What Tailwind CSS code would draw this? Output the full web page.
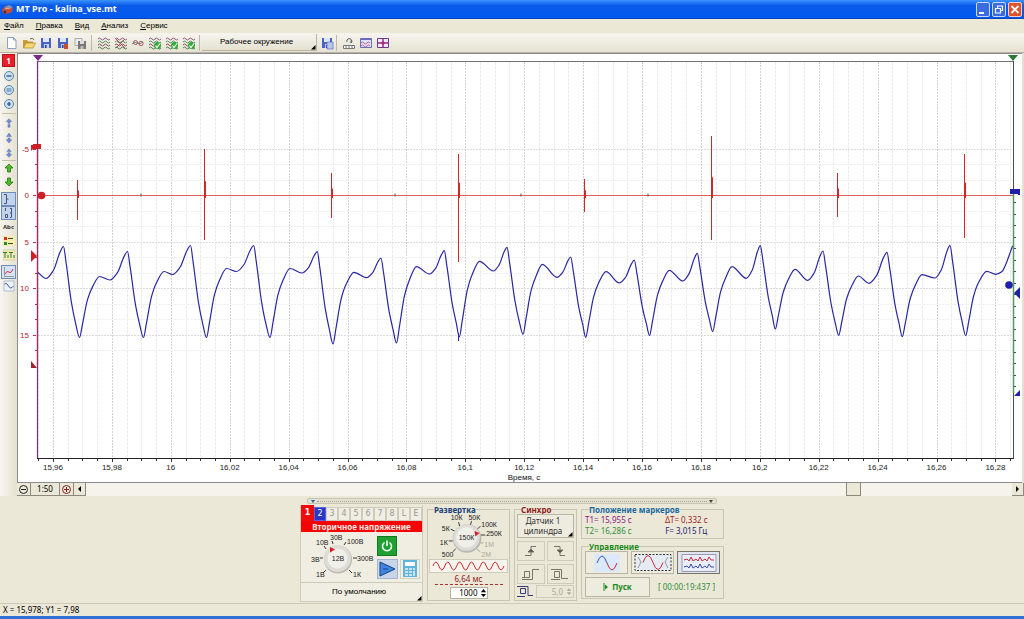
<!DOCTYPE html>
<html lang="ru">
<head>
<meta charset="utf-8">
<title>MT Pro - kalina_vse.mt</title>
<script src="https://cdn.jsdelivr.net/npm/@tailwindcss/browser@4"></script>
</head>
<body class="min-h-screen flex flex-col bg-[#ece8d8] font-['Noto_Sans',sans-serif] text-[8px] leading-[10px] text-black">

<svg class="hidden">
  <symbol id="waves" viewBox="0 0 14 14"><g fill="none" stroke-width="1"><path stroke="#8a5a78" d="M1 3q1.500-2 3 0t3 0t3 0t3 0"/><path stroke="#4f8a5a" d="M1 6q1.500-2 3 0t3 0t3 0t3 0"/><path stroke="#8a4a60" d="M1 9q1.500-2 3 0t3 0t3 0t3 0"/><path stroke="#4f7a5a" d="M1 12q1.500-2 3 0t3 0t3 0t3 0"/></g></symbol>
  <symbol id="waves-ok" viewBox="0 0 14 14"><use href="#waves"/><circle cx="9.500" cy="9.500" r="3.500" fill="#35a83a"/><path d="M7.500 9.500l1.500 2 3-4" fill="none" stroke="#fff" stroke-width="1.200"/></symbol>
  <symbol id="floppy" viewBox="0 0 14 14"><path d="M2 2h10v10H2z" fill="#4a63c4"/><path d="M4 2h6v4H4z" fill="#dfe6fa"/><path d="M5 8h5v4H5z" fill="#c4cbe8"/><path d="M6 9h1.500v3H6z" fill="#2b3c90"/></symbol>
  <symbol id="updown" viewBox="0 0 14 14"><path d="M7 0l3.500 5h-7zM7 14l4-4.500H8.500V7h-3v2.500H3z" fill="#6f8fd0" stroke="#3d62ad" stroke-width=".5"/></symbol>
</svg>

<!-- Title bar -->
<header class="h-[19px] shrink-0 flex items-center bg-gradient-to-b from-[#3a93ff] via-[#0a5ae8] via-30% to-[#0058ee] border-b border-[#0a44b8] pl-[1px]">
  <svg class="w-[13px] h-[13px]" viewBox="0 0 13 13"><path d="M1 7q2-4 7-4l4 2-1 4-5 2-4-1z" fill="#c0503a"/><path d="M3 4l5-2 4 2-4 2z" fill="#8a8fa8"/><circle cx="4" cy="9" r="1.500" fill="#5a2a2a"/><path d="M4 6l5-1" stroke="#f0b0a0"/></svg>
  <h1 class="ml-[2px] flex-1 text-[9px] leading-[12px] font-bold text-white font-['Open_Sans',sans-serif]">MT Pro - kalina_vse.mt</h1>
  <div class="flex gap-[2px] pr-[2px]">
    <button aria-label="Свернуть" class="w-[14px] h-[15px] rounded-[2px] border border-[#c9d8fb] bg-[#3a6be0]"><svg viewBox="0 0 12 13" class="w-full h-full"><path d="M2 10h5" stroke="#fff" stroke-width="2"/></svg></button>
    <button aria-label="Восстановить" class="w-[14px] h-[15px] rounded-[2px] border border-[#c9d8fb] bg-[#3a6be0]"><svg viewBox="0 0 12 13" class="w-full h-full"><path d="M4.500 5V3h5v4.500H8M2.500 5.500h5V10h-5z" fill="none" stroke="#fff" stroke-width="1.200"/></svg></button>
    <button aria-label="Закрыть" class="w-[14px] h-[15px] rounded-[2px] border border-[#f3cfc4] bg-[#e0522c]"><svg viewBox="0 0 12 13" class="w-full h-full"><path d="M2.500 3l7 7M9.500 3l-7 7" stroke="#fff" stroke-width="1.800"/></svg></button>
  </div>
</header>

<!-- Menu -->
<nav class="h-[14px] shrink-0 flex items-center gap-[12px] pl-[4px] bg-[#ece8d6] font-['Liberation_Sans',sans-serif]">
  <a href="#"><u>Ф</u>айл</a><a href="#"><u>П</u>равка</a><a href="#"><u>В</u>ид</a><a href="#"><u>А</u>нализ</a><a href="#"><u>С</u>ервис</a>
</nav>

<!-- Toolbar -->
<div class="h-[20px] shrink-0 flex items-center pl-[3px] bg-gradient-to-b from-[#f6f4ee] to-[#e6e3d3] border-b border-[#b5b2a4]">
  <button aria-label="Новый" class="w-[17px] grid place-items-center"><svg class="w-[14px] h-[14px]" viewBox="0 0 14 14"><path d="M2.500 1.500h6l2.500 2.500v8.500H2.500z" fill="#fff" stroke="#8fa0c0"/><path d="M8.500 1.500V4H11" fill="none" stroke="#8fa0c0"/></svg></button>
  <button aria-label="Открыть" class="w-[17px] grid place-items-center"><svg class="w-[14px] h-[14px]" viewBox="0 0 14 14"><path d="M1 4h4l1 1.500h5V12H1z" fill="#c99a34"/><path d="M4 7h9.500l-2.500 5H1.500z" fill="#f6d878" stroke="#b0852c" stroke-width=".7"/><path d="M8 3q3-2 4 1" fill="none" stroke="#6f6a3a"/></svg></button>
  <button aria-label="Сохранить" class="w-[17px] grid place-items-center"><svg class="w-[14px] h-[14px]"><use href="#floppy"/></svg></button>
  <button aria-label="Сохранить как" class="w-[17px] grid place-items-center"><svg class="w-[14px] h-[14px]" viewBox="0 0 14 14"><use href="#floppy"/><path d="M8 8h4v5H8z" fill="#cc4a2c"/></svg></button>
  <button aria-label="Сохранить всё" class="w-[17px] grid place-items-center"><svg class="w-[14px] h-[14px]" viewBox="0 0 14 14"><path d="M2 2.500h7v7H2z" fill="#eee" stroke="#aaa"/><path d="M5 5h8v8H5z" fill="#777"/><path d="M7 5h4v3H7z" fill="#ddd"/><path d="M7.500 10h3v3h-3z" fill="#bbb"/></svg></button>
  <i class="mx-[3px] w-px h-[16px] bg-[#bdb9a8]"></i>
  <button aria-label="Осциллограммы" class="w-[17px] grid place-items-center"><svg class="w-[14px] h-[14px]"><use href="#waves"/></svg></button>
  <button aria-label="Скрыть все" class="w-[17px] grid place-items-center"><svg class="w-[14px] h-[14px]" viewBox="0 0 14 14"><use href="#waves"/><path d="M2 3l9 9M11 3l-9 9" stroke="#a03a50" stroke-width=".8"/></svg></button>
  <button aria-label="Сравнить" class="w-[17px] grid place-items-center"><svg class="w-[14px] h-[14px]" viewBox="0 0 14 14" fill="none"><circle cx="4.500" cy="6.500" r="2" stroke="#a03a50" stroke-width=".8"/><circle cx="10" cy="7.500" r="2.200" stroke="#a03a50" stroke-width=".8"/><path d="M1 8q2-3 5-1t6-1" stroke="#556a58" stroke-width=".8"/></svg></button>
  <button aria-label="Группа 1" class="w-[17px] grid place-items-center"><svg class="w-[14px] h-[14px]"><use href="#waves-ok"/></svg></button>
  <button aria-label="Группа 2" class="w-[17px] grid place-items-center"><svg class="w-[14px] h-[14px]"><use href="#waves-ok"/></svg></button>
  <button aria-label="Группа 3" class="w-[17px] grid place-items-center"><svg class="w-[14px] h-[14px]"><use href="#waves-ok"/></svg></button>
  <i class="mx-[2px] w-px h-[16px] bg-[#bdb9a8]"></i>
  <button class="w-[115px] h-[17px] flex items-center justify-center bg-gradient-to-b from-[#f6f4ee] to-[#e4e1d2] border-b border-r border-[#b9b5a5] font-['Liberation_Sans',sans-serif]"><span class="flex-1">Рабочее окружение</span><svg class="w-[5px] h-[5px] self-end" viewBox="0 0 5 5"><path d="M4.500 0v4.500H0z"/></svg></button>
  <button aria-label="Сохранить окружение" class="w-[19px] grid place-items-center"><svg class="w-[14px] h-[14px]" viewBox="0 0 14 14"><use href="#floppy"/><path d="M7 6h6v7H7z" fill="#b9c6ee" stroke="#5a6fc0" stroke-width=".7"/></svg></button>
  <i class="mr-[3px] w-px h-[16px] bg-[#bdb9a8]"></i>
  <button aria-label="Линейка" class="w-[17px] grid place-items-center"><svg class="w-[14px] h-[14px]" viewBox="0 0 14 14" fill="none"><path d="M1.500 9.500h11v3h-11z" fill="#fff" stroke="#777"/><path d="M4 10v2M7 10v2M10 10v2" stroke="#777"/><path d="M5 6a2.500 2.500 0 1 1 4 1M9 7V4.500" stroke="#555"/></svg></button>
  <button aria-label="График" class="w-[17px] grid place-items-center"><svg class="w-[14px] h-[14px]" viewBox="0 0 14 14" fill="none"><path d="M1.500 2.500h11v9h-11z" fill="#dfe4fa" stroke="#6a6fb8"/><path d="M2 3.500h10" stroke="#6a6fb8"/><path d="M2 7q1.500-2 3 0t3 0t3 0M2 10q1.500-2 3 0t3 0t3 0" stroke="#b0406a" stroke-width=".8"/></svg></button>
  <button aria-label="Раскладка" class="w-[17px] grid place-items-center"><svg class="w-[14px] h-[14px]" viewBox="0 0 14 14" fill="none"><path d="M1.500 2.500h11v9h-11z" fill="#f6e8f4" stroke="#6a3a90"/><path d="M7 3v8M2 7h10" stroke="#a02a80" stroke-width="1.500"/><path d="M5 7l2-2 2 2-2 2z" fill="#a02a80"/></svg></button>
</div>

<main class="flex shrink-0">
  <!-- Channel tools -->
  <aside class="w-[17px] shrink-0 flex flex-col items-center pt-[1px] bg-gradient-to-r from-[#f7f5f0] to-[#e6e2d0]">
    <button class="w-[13px] h-[13px] mb-[2px] bg-[#e8202c] border border-[#b01820] text-white font-bold leading-[10px]">1</button>
    <button aria-label="Уменьшить" class="h-[14px]"><svg class="w-[12px] h-[12px]" viewBox="0 0 12 12"><circle cx="6" cy="6" r="4.500" fill="#c8e0f0" stroke="#5f86ac"/><path d="M3.500 6h5" stroke="#254a78" stroke-width="1.200"/></svg></button>
    <button aria-label="Исходный размер" class="h-[14px]"><svg class="w-[12px] h-[12px]" viewBox="0 0 12 12"><circle cx="6" cy="6" r="4.500" fill="#c8e0f0" stroke="#5f86ac"/><path d="M3.500 5h5M3.500 7h5" stroke="#4d77a8"/></svg></button>
    <button aria-label="Увеличить" class="h-[14px]"><svg class="w-[12px] h-[12px]" viewBox="0 0 12 12"><circle cx="6" cy="6" r="4.500" fill="#c8e0f0" stroke="#5f86ac"/><path d="M4 6h4M6 4v4" stroke="#254a78" stroke-width="1.200"/></svg></button>
    <i class="mt-[2px] w-[14px] h-[2px] border-t border-[#c5c1b0]"></i>
    <button aria-label="Сдвиг вверх" class="h-[15px]"><svg class="w-[10px] h-[12px]" viewBox="0 0 14 14"><path d="M7 1l4 4H8.500v2.500h-3V5H3zM5.500 9h3v4h-3z" fill="#6f8fd0" stroke="#3d62ad" stroke-width=".5"/></svg></button>
    <button aria-label="По центру" class="h-[15px]"><svg class="w-[10px] h-[12px]"><use href="#updown"/></svg></button>
    <button aria-label="Сдвиг вниз" class="h-[15px]"><svg class="w-[10px] h-[12px]" viewBox="0 0 14 14"><path d="M7 13l4-4H8.500V6.500h-3V9H3zM7 1l3 4H4z" fill="#6f8fd0" stroke="#3d62ad" stroke-width=".5"/></svg></button>
    <i class="w-[14px] h-px bg-[#c5c1b0]"></i>
    <button aria-label="Вверх" class="h-[14px]"><svg class="w-[10px] h-[10px]" viewBox="0 0 10 10"><path d="M5 1l4 4H6.500v4h-3V5H1z" fill="#4cb82c" stroke="#257a10" stroke-width=".8"/></svg></button>
    <button aria-label="Вниз" class="h-[14px]"><svg class="w-[10px] h-[10px]" viewBox="0 0 10 10"><path d="M5 9l4-4H6.500V1h-3v4H1z" fill="#4cb82c" stroke="#257a10" stroke-width=".8"/></svg></button>
    <button aria-label="Шкала" class="mt-[3px] w-[15px] h-[14px] bg-[#c3d3ec] border border-[#6f8cb8]"><svg class="w-full h-full" viewBox="0 0 13 12"><path d="M2 1.500h2.500v9H2M4.500 6h2" fill="none" stroke="#44557c"/></svg></button>
    <button aria-label="Значения шкалы" class="w-[15px] h-[14px] bg-[#c3d3ec] border border-[#6f8cb8]"><svg class="w-full h-full" viewBox="0 0 13 12"><path d="M3.500 1v3M5.500 7.500h-2v3h2zM9.500 1v9.500M8 1.500h1M8 6h1M8 10.500h1" fill="none" stroke="#44557c"/></svg></button>
    <button aria-label="Подписи" class="w-[13px] h-[14px] text-[6px] leading-[8px] font-bold text-[#333]">Abc</button>
    <button aria-label="Легенда" class="h-[14px]"><svg class="w-[12px] h-[12px]" viewBox="0 0 12 12"><path d="M0 1h12v10H0z" fill="#f5eea8"/><path d="M1 2h3v3H1z" fill="#c33"/><path d="M1 7h3v3H1z" fill="#2a8a2a"/><path d="M5 3.500h5M5 8.500h5" stroke="#444"/></svg></button>
    <button aria-label="Маркеры времени" class="h-[14px]"><svg class="w-[12px] h-[12px]" viewBox="0 0 12 12"><path d="M0 1h12v10H0z" fill="#f3f1b8" stroke="#bbb67a" stroke-width=".5"/><path d="M0 3.500h4M2 3.500V9M5 6v3M6 3.500h4M8 3.500V9M11 6v3" stroke="#2f7a2f" fill="none"/></svg></button>
    <button aria-label="Кривая" class="mt-[3px] w-[15px] h-[14px] bg-[#d6e2f6] border border-[#6f8cb8]"><svg class="w-full h-full" viewBox="0 0 13 12"><path d="M2.500 1v9.500H12" fill="none" stroke="#999"/><path d="M3 8q2-4 4-2t4-3" fill="none" stroke="#d0303c"/></svg></button>
    <button aria-label="Сглаживание" class="h-[14px]"><svg class="w-[12px] h-[12px]" viewBox="0 0 12 12"><path d="M1 1h10v10H1z" fill="#eef2fb" stroke="#8c9cc0" stroke-width=".6"/><path d="M1.500 4q2-2 4 2t5 0" fill="none" stroke="#3a56a8"/></svg></button>
  </aside>

  <section class="flex-1 min-w-0">
    <svg id="chart" class="block w-full bg-white" viewBox="17 53 1007 430" font-family="'Liberation Sans', sans-serif" font-size="8">
      <path d="M17.500 53V483M17 53.500H1022M17 482.500H1022" stroke="#8d8a90" fill="none"/>
      <path d="M1022 53h2v430h-2z" fill="#e3e0d4"/>
      <g id="grid" fill="none"></g>
      <path d="M38 61.500h975" stroke="#70707a"/>
      <path d="M38 195h975v1H38z" fill="#e06060"/>
      <g id="spikes" stroke="#cc2a2a" fill="none"></g>
      <path id="curve" fill="none" stroke="#2a26a0" stroke-width="1.200"/>
      <path d="M458.500 333v8" stroke="#2a26a0"/>
      <path d="M37.500 61v397" stroke="#7a2a86" stroke-width="1.200"/>
      <path d="M37.500 148v218" stroke="#a8285a" stroke-width="1.200"/>
      <path d="M1013.500 61v129M1013.500 393v66" stroke="#44504c"/>
      <path d="M1013.500 190v203" stroke="#4d9a62" stroke-width="1.500"/>
      <path d="M37 458.500h977" stroke="#222"/>
      <g id="ticks"></g>
      <path d="M33 55h10l-5 6z" fill="#7a2a86"/>
      <path d="M1008 55h10l-5 6z" fill="#2a7a34"/>
      <path d="M31 151v-6h2v-1h8v5h-8z" fill="#cc1f28"/>
      <circle cx="41.500" cy="195.500" r="3.800" fill="#cc1f28"/>
      <path d="M31 250l6 6-6 6z" fill="#cc1f28"/>
      <path d="M31 361l6 7h-6z" fill="#a82030"/>
      <path d="M1010 189h10v6h-2v-1h-8z" fill="#1f1fa8"/>
      <circle cx="1009" cy="285" r="3.800" fill="#1f1fa8"/>
      <path d="M1020 287v12l-6-6z" fill="#1f1fa8"/>
      <path d="M1020 390v6h-6z" fill="#1f1fa8"/>
      <g id="labels" text-anchor="middle" fill="#222"></g>
      <text x="524" y="480" text-anchor="middle" fill="#111">Время, с</text>
    </svg>
    <div class="h-[13px] flex bg-[#f5f3ec]">
      <button aria-label="Уменьшить масштаб" class="w-[14px] grid place-items-center bg-[#ece8d8] border-r border-b border-[#8c897c]"><svg class="w-[11px] h-[11px]" viewBox="0 0 11 11" fill="none" stroke="#222"><circle cx="5.500" cy="5.500" r="4"/><path d="M3 5.500h5"/></svg></button>
      <button class="w-[29px] bg-[#ece8d8] border-r border-b border-[#8c897c]">1:50</button>
      <button aria-label="Увеличить масштаб" class="w-[14px] grid place-items-center bg-[#ece8d8] border-r border-b border-[#8c897c]"><svg class="w-[11px] h-[11px]" viewBox="0 0 11 11" fill="none" stroke="#7a2020"><circle cx="5.500" cy="5.500" r="4"/><path d="M3 5.500h5M5.500 3v5"/></svg></button>
      <button aria-label="Влево" class="w-[12px] grid place-items-center bg-[#ece8d8] border-r border-b border-[#8c897c]"><svg class="w-[5px] h-[6px]" viewBox="0 0 5 6"><path d="M4 0v6L1 3z"/></svg></button>
      <div class="flex-1 flex justify-end"><div class="w-[15px] mr-[151px] bg-[#ece8d8] border-r border-b border-l border-[#8c897c]"></div></div>
      <button aria-label="Вправо" class="w-[12px] grid place-items-center bg-[#ece8d8] border-r border-b border-[#8c897c]"><svg class="w-[5px] h-[6px]" viewBox="0 0 5 6"><path d="M1 0v6l3-3z"/></svg></button>
    </div>
  </section>
</main>

<!-- Device panel -->
<section class="flex-1 flex flex-col items-center pt-[2px]">
  <div class="w-[424px] flex flex-col">
    <div class="h-[6px] mx-[7px] flex items-center justify-between border border-[#c8c4b4] rounded-[2px] bg-[#e4e0d0] px-[3px]">
      <svg class="w-[4px] h-[3px]" viewBox="0 0 4 3"><path d="M0 0h4L2 3z" fill="#2a6a9a"/></svg>
      <i class="flex-1 mx-[2px] border-t border-dotted border-[#a5a294]"></i>
      <svg class="w-[4px] h-[3px]" viewBox="0 0 4 3"><path d="M0 0h4L2 3z" fill="#444"/></svg>
    </div>
    <div class="flex gap-[4px] pt-[1px]">

      <!-- Channel -->
      <div class="w-[123px] border border-[#cfcbbb] border-t-0 font-['Liberation_Sans',sans-serif]">
        <div class="flex h-[16px] items-end font-['DejaVu_Sans',sans-serif] text-[#9b988c]">
          <button class="w-[13px] h-[16px] bg-[#f00a0a] text-white font-bold">1</button>
          <button class="w-[12px] h-[14px] bg-[#2b36c4] text-white border border-[#5a64e0]">2</button>
          <button class="w-[12px] h-[14px] border border-[#cfcbbb] bg-[#f0eee4]">3</button>
          <button class="w-[12px] h-[14px] border border-[#cfcbbb] bg-[#f0eee4]">4</button>
          <button class="w-[12px] h-[14px] border border-[#cfcbbb] bg-[#f0eee4]">5</button>
          <button class="w-[12px] h-[14px] border border-[#cfcbbb] bg-[#f0eee4]">6</button>
          <button class="w-[12px] h-[14px] border border-[#cfcbbb] bg-[#f0eee4]">7</button>
          <button class="w-[12px] h-[14px] border border-[#cfcbbb] bg-[#f0eee4]">8</button>
          <button class="w-[12px] h-[14px] border border-[#cfcbbb] bg-[#f0eee4]">L</button>
          <button class="w-[12px] h-[14px] border border-[#cfcbbb] bg-[#f0eee4]">E</button>
        </div>
        <div class="h-[11px] bg-[#f90000] text-[#ffe9e0] text-center font-bold font-['Noto_Sans',sans-serif] leading-[11px]">Вторичное напряжение</div>
        <div class="flex h-[50px] bg-[#f0ede2]">
          <svg class="w-[76px] h-[50px]" viewBox="301 532 76 50" font-size="7" fill="#222">
            <g stroke="#333" fill="none"><path d="M326 570l-3 3M323 558h-3M326 549l-2-3M333 544l-1-3M344 545l2-3M353 558h4M349 570l3 3"/></g>
            <circle cx="338" cy="559.500" r="14" fill="#b9b8b2"/><circle cx="337.500" cy="558.500" r="13.500" fill="#dddcd6"/><circle cx="337.500" cy="558.500" r="10" fill="#f0efea"/>
            <path d="M330 547l5 2.500-5 3z" fill="#dd1c1c"/>
            <text x="338" y="561" text-anchor="middle">12В</text>
            <text x="316" y="577">1В</text><text x="311" y="562">3В</text><text x="316" y="545">10В</text><text x="330" y="540">30В</text><text x="347" y="544">100В</text><text x="357" y="561">300В</text><text x="353" y="577">1К</text>
          </svg>
          <div class="flex-1 grid grid-cols-[21px_20px] content-center gap-x-[2px] gap-y-[3px]">
            <button aria-label="Включить" class="w-[20px] h-[20px] bg-[#1fa032] border border-[#0f7a20] grid place-items-center"><svg class="w-[14px] h-[14px]" viewBox="0 0 14 14" fill="none" stroke="#fff" stroke-width="1.500"><path d="M4.500 3.500a4.500 4.500 0 1 0 5 0M7 1.500V7"/></svg></button>
            <span></span>
            <button aria-label="Сигнал" class="w-[21px] h-[20px] bg-[#c9d5e8] border border-[#a5b3cc] grid place-items-center"><svg class="w-[17px] h-[16px]" viewBox="0 0 17 16"><path d="M1 1l15 7-15 7z" fill="#3f86e0" stroke="#17407f"/><path d="M4 8h5" stroke="#17407f"/></svg></button>
            <button aria-label="Калькулятор" class="w-[20px] h-[20px] grid place-items-center border border-[#d5d2c4]"><svg class="w-[14px] h-[17px]" viewBox="0 0 14 17"><path d="M0 0h14v17H0z" fill="#5fb4dc"/><path d="M2 2h10v4H2z" fill="#fff"/><path d="M2 8h3v2H2zM6 8h3v2H6zM10 8h2v2h-2zM2 11h3v2H2zM6 11h3v2H6zM2 14h3v2H2zM6 14h3v2H6zM10 11h2v5h-2z" fill="#c6e4f4"/></svg></button>
          </div>
        </div>
        <button class="w-full h-[19px] flex items-center bg-[#f0ede2] border-t border-[#cfcbbb]"><span class="flex-1">По умолчанию</span><svg class="w-[5px] h-[5px] self-end" viewBox="0 0 5 5"><path d="M4.500 0v4.500H0z"/></svg></button>
      </div>

      <!-- Sweep -->
      <fieldset class="w-[83px] h-[96px] border border-[#c9c5b4] px-[1px] flex flex-col items-center">
        <legend class="ml-[5px] h-[9px] leading-[9px] font-bold text-[#1a3f78]">Развертка</legend>
        <svg class="w-full h-[45px] shrink-0" viewBox="429 515 80 45" font-size="7" fill="#222" font-family="'Liberation Sans', sans-serif">
          <g stroke="#333" fill="none"><path d="M455 532l-4-2M453 542h-4M456 550l-3 3M460 527l-1-4M471 526l1-4M478 530l3-3M480 536h6"/></g>
          <g stroke="#aaa79a" fill="none"><path d="M480 544h4M477 550l4 3"/></g>
          <circle cx="467.500" cy="539.500" r="14.500" fill="#b9b8b2"/><circle cx="467" cy="538.500" r="13.500" fill="#dddcd6"/><circle cx="467" cy="538.500" r="10.500" fill="#f0efea"/>
          <path d="M475 532l5 2-4 3.500z" fill="#dd1c1c"/>
          <text x="467" y="541" text-anchor="middle">150К</text>
          <text x="451" y="521">10К</text><text x="469" y="521">50К</text><text x="482" y="528">100К</text><text x="487" y="537">250К</text><text x="442" y="532">5К</text><text x="440" y="546">1К</text><text x="442" y="558">500</text>
          <g fill="#aaa79a"><text x="485" y="548">1М</text><text x="482" y="558">2М</text></g>
        </svg>
        <svg class="w-full h-[14px] shrink-0 bg-[#f7f5ee] border border-[#cfcbbb]" viewBox="0 0 78 12"><path d="M3 6q3-8 6 0t6 0t6 0t6 0t6 0t6 0t6 0t6 0t6 0t6 0t6 0t6 0" fill="none" stroke="#cc2a2a"/></svg>
        <div class="w-[68px] h-[12px] shrink-0 text-center leading-[12px] text-[#8e1c1c] border-b border-dashed border-[#b03030]">6,64 мс</div>
        <div class="mt-[2px] w-[38px] h-[12px] shrink-0 flex bg-white border border-[#b5b1a0]"><input aria-label="Развертка" value="1000" class="w-[27px] text-right leading-[10px] bg-transparent"><svg class="ml-[2px] w-[8px] h-[10px]" viewBox="0 0 8 10"><path d="M1 4l3-3.500L7 4zM1 6l3 3.500L7 6z"/></svg></div>
      </fieldset>

      <!-- Trigger -->
      <fieldset class="w-[63px] h-[96px] border border-[#c9c5b4] px-[2px] flex flex-col">
        <legend class="ml-[4px] h-[9px] leading-[9px] font-bold text-[#8e1c1c]">Синхро</legend>
        <button class="h-[24px] shrink-0 flex items-center border border-[#b9b5a4] bg-[#eeebdf] leading-[10px] text-[#333]"><span class="flex-1">Датчик 1 цилиндра</span><svg class="w-[5px] h-[5px] self-end" viewBox="0 0 5 5"><path d="M4.500 0v4.500H0z"/></svg></button>
        <div class="mt-[3px] grid grid-cols-2 gap-x-[2px] gap-y-[3px]">
          <button aria-label="Фронт" class="h-[20px] border border-[#cfcbbb] grid place-items-center"><svg class="w-[14px] h-[12px]" viewBox="0 0 14 12" fill="none" stroke="#77746a"><path d="M1 10.500h6V1.500h5"/><path d="M4 7l3-3 3 3z" fill="#55534c"/></svg></button>
          <button aria-label="Спад" class="h-[20px] border border-[#cfcbbb] grid place-items-center"><svg class="w-[14px] h-[12px]" viewBox="0 0 14 12" fill="none" stroke="#77746a"><path d="M1 1.500h6v9h5"/><path d="M4 5l3 3 3-3z" fill="#55534c"/></svg></button>
          <button aria-label="Уровень вверх" class="h-[20px] border border-[#cfcbbb] grid place-items-center"><svg class="w-[18px] h-[13px]" viewBox="0 0 18 13" fill="none" stroke="#77746a"><path d="M0 11.500h10.500V1.500H17M2.500 3.500h5v6h-5zM0 9.500h3"/></svg></button>
          <button aria-label="Уровень вниз" class="h-[20px] border border-[#cfcbbb] grid place-items-center"><svg class="w-[18px] h-[13px]" viewBox="0 0 18 13" fill="none" stroke="#77746a"><path d="M0 1.500h10.500v9H17M3.500 3.500h5v6h-5zM0 11.500h9"/></svg></button>
        </div>
        <div class="mt-[1px] flex items-center gap-[2px] text-[#aaa79a]"><svg class="w-[17px] h-[13px] text-[#3a3a78]" viewBox="0 0 17 13" fill="none" stroke="currentColor"><path d="M0 1.500h11v9h5M3.500 3.500h5v5h-5zM0 11.500h8"/></svg><div class="flex-1 h-[13px] flex items-center border border-[#cfcbbb]"><input aria-label="Задержка" disabled value="5,0" class="flex-1 w-[20px] text-right"><svg class="ml-[3px] mr-[1px] w-[6px] h-[9px]" viewBox="0 0 8 10" fill="#aaa79a"><path d="M1 4l3-3.500L7 4zM1 6l3 3.500L7 6z"/></svg></div></div>
      </fieldset>

      <!-- Markers and control -->
      <div class="w-[143px] flex flex-col gap-[3px]">
        <fieldset class="border border-[#c9c5b4] px-[3px] pb-[2px]">
          <legend class="ml-[4px] h-[9px] leading-[9px] font-bold text-[#1a6aa0]">Положение маркеров</legend>
          <div class="grid grid-cols-2 leading-[11px]"><span class="text-[#8a2080]">T1= 15,955 с</span><span class="text-[#a01c1c] justify-self-center">ΔT= 0,332 с</span><span class="text-[#2f8f3a]">T2= 16,286 с</span><span class="text-[#23236e] justify-self-center">F= 3,015 Гц</span></div>
        </fieldset>
        <fieldset class="border border-[#c9c5b4] px-[3px] pb-[1px]">
          <legend class="ml-[4px] h-[9px] leading-[9px] font-bold text-[#1a8a1a]">Управление</legend>
          <div class="grid grid-cols-3 gap-[3px]">
            <button aria-label="Осциллограф" class="h-[23px] border border-[#b9b5a4] bg-[#eeebdf] grid place-items-center"><svg class="w-[26px] h-[18px]" viewBox="0 0 26 18"><path d="M0 0h26v18H0z" fill="#dce9f8"/><path d="M3 9q5-14 10 0" fill="none" stroke="#3a56c0"/><path d="M13 9q5 14 10 0" fill="none" stroke="#cc2a3a"/></svg></button>
            <button aria-label="Запись" class="h-[23px] border border-[#b9b5a4] bg-[#eeebdf] grid place-items-center"><svg class="w-[38px] h-[19px]" viewBox="0 0 38 19"><path d="M1 1.500h36v16H1z" fill="#e6ecf4" stroke="#333" stroke-dasharray="2 1.500"/><path d="M4 4l3 5-3 6M34 4l-3 5 3 6" fill="none" stroke="#999"/><path d="M9 9.500q5-14 10 0t10 0" fill="none" stroke="#cc2a3a"/></svg></button>
            <button aria-label="Самописец" class="h-[23px] border border-[#77746a] bg-[#dfe4ee] grid place-items-center"><svg class="w-[36px] h-[18px]" viewBox="0 0 36 18" fill="none"><path d="M1 .5h34v17H1z" fill="#e9eefa" stroke="#99a"/><path d="M3 6l3-1 2 2 2-4 2 4 3-2 2 2 2-4 2 4 3-2 2 2 2-4 2 3h3" stroke="#cc2a3a"/><path d="M3 13l3-1 2 2 2-4 2 4 3-2 2 2 2-4 2 4 3-2 2 2 2-4 2 3h3" stroke="#3a46b0"/></svg></button>
          </div>
          <div class="mt-[3px] flex items-center gap-[8px]">
            <button class="w-[65px] h-[20px] flex items-center justify-center gap-[3px] border border-[#b9b5a4] bg-[#eeebdf] text-[#1a8a1a] font-bold"><svg class="w-[6px] h-[8px]" viewBox="0 0 6 8"><path d="M1 0v8" stroke="#1a8a1a"/><path d="M2 1.500l3 2.500-3 2.500z" fill="#1a8a1a"/></svg>Пуск</button>
            <output class="text-[#2f8f3a] whitespace-nowrap">[ 00:00:19:437 ]</output>
          </div>
        </fieldset>
      </div>
    </div>
  </div>
</section>

<footer class="h-[16px] shrink-0 border-t border-[#cfcbb8] border-b-[3px] border-b-[#2f6fd6] pl-[3px] flex items-center">X = 15,978; Y1 = 7,98</footer>

<script>
const x0 = 53, xStep = 58.9, yZero = 195, yStep = 46.5;
let grid = '', ticks = '', labels = '';
// vertical grid and time labels
for (let i = -1; i <= 65; i++) {
  const x = Math.round(x0 + i * xStep / 4) + 0.5, major = i % 4 === 0;
  if (x > 1013) break;
  grid += `<path d="M${x} 62v396" stroke="${major ? '#d2d0d4' : '#ebeaec'}" stroke-dasharray="${major ? '2 1' : '3 1'}"/>`;
  ticks += `<path d="M${x} 459v${major ? 3 : 2}" stroke="#333"/>`;
}
['15,96','15,98','16','16,02','16,04','16,06','16,08','16,1','16,12','16,14','16,16','16,18','16,2','16,22','16,24','16,26','16,28']
  .forEach((t, i) => labels += `<text x="${x0 + i * xStep}" y="470">${t}</text>`);
// horizontal grid and value labels
for (let i = -3; i <= 10; i++) {
  const y = Math.round(yZero + i * yStep / 3) + 0.5, major = i % 3 === 0;
  if (i !== 0) grid += `<path d="M38 ${y}H1013" stroke="${major ? '#dddbde' : '#f1f0f2'}" stroke-dasharray="${major ? '2 1' : '3 1'}"/>`;
  ticks += `<path d="M${major ? 33 : 35} ${y}h3" stroke="#c02a4a"/>`;
}
for (let y = 202; y < 393; y += 11.5) ticks += `<path d="M1014 ${Math.round(y) + 0.5}h2" stroke="#444a6a"/>`;
['-5','0','5','10','15'].forEach((t, i) => labels += `<text x="${29}" y="${yZero + 3 + (i - 1) * yStep}" text-anchor="end" fill="#b8242c">${t}</text>`);

// ignition spikes: x, top, bottom
let spikes = '';
[[77,180,220],[204,149,240],[331,173,218],[458,154,262],[584,179,212],[711,136,240],[837,173,217],[964,154,238]]
  .forEach(([x, a, b]) => spikes += `<path d="M${x}.500 ${a}V${b}"/><path d="M${x + 1} ${195 - (195 - a) * 0.3}V198" stroke-width="2"/>`);
[141,395,521,648].forEach(x => spikes += `<path d="M${x} 193.500v3" stroke="#555"/>`);

// per cycle: dip, peak, trough, following bump
const cycles = [
  [46,278.5,63.5,246.5,79.5,337.5,99.5,276.5],[110,280,127.5,251.5,143.5,337.5,164,271.5],
  [172.5,274.5,190.5,245.5,206.5,337.5,226.5,268.5],[236.5,271.5,253.7,245.5,270,337.5,290,268.5],
  [302,273,317.3,251.7,333,344,354,272.3],[366.5,277.7,381,258,396.5,343,416.5,266.7],
  [429.5,274,444.3,250.7,459.3,337,479.5,261.3],[493.3,271,507,247.3,523,334.3,542.3,264.3],
  [557,277.3,570.7,257,585.7,337.3,606,271.7],[619.3,283,634.3,260,649.5,335.5,669.3,270.3],
  [682.7,281,697.3,253.3,712.7,331.7,732,266.7],[746.3,278.3,760.3,245.7,775.3,329,795,269.3],
  [807.7,280.3,823,251,838.7,335.3,858.3,276],[869,283.3,887,252.3,902.3,336.7,922,274.7],
  [935,278,950,245.3,965.7,335.7,986.7,271.3]];
const p = [[38,272.5]];
for (const [dx,dy,px,py,tx,ty,bx,by] of cycles) {
  const fall = ty - py, rise = ty - by, up = dy - py;
  p.push([dx,dy],[dx+(px-dx)*0.42,dy-up*0.25],[dx+(px-dx)*0.8,dy-up*0.82],[px,py],
    [px+2.5,py+fall*0.17],[px+8,py+fall*0.62],[px+12,py+fall*0.84],[tx,ty],
    [tx+3,ty-rise*0.22],[tx+8,ty-rise*0.62],[tx+13,ty-rise*0.83],[bx,by]);
}
p.push([995.7,274.3],[1001.7,271.7],[1012.7,245.7]);
// monotone cubic interpolation
const slope = p.slice(1).map((q, i) => (q[1] - p[i][1]) / (q[0] - p[i][0]));
const m = p.map((_, i) => {
  const a = slope[i - 1], b = slope[i];
  if (a === undefined || b === undefined) return a ?? b;
  return a * b <= 0 ? 0 : 2 * a * b / (a + b);
});
let d = `M${p[0]}`;
for (let i = 1; i < p.length; i++) {
  const h = (p[i][0] - p[i-1][0]) / 3;
  d += `C${p[i-1][0]+h} ${p[i-1][1]+m[i-1]*h} ${p[i][0]-h} ${p[i][1]-m[i]*h} ${p[i]}`;
}
document.getElementById('grid').innerHTML = grid;
document.getElementById('ticks').innerHTML = ticks;
document.getElementById('labels').innerHTML = labels;
document.getElementById('spikes').innerHTML = spikes;
document.getElementById('curve').setAttribute('d', d);
</script>
</body>
</html>
